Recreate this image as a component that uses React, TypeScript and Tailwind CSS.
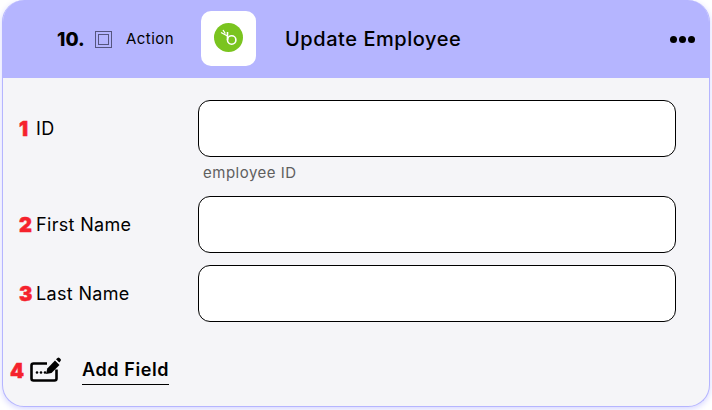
const FIELDS = [
    { num: '1', label: 'ID', hint: 'employee ID' },
    { num: '2', label: 'First Name' },
    { num: '3', label: 'Last Name' },
]

function RedNum({ value, className }: { value: string; className: string }) {
    return <span className={`text-[20px] font-black leading-none text-[#f5222d] [-webkit-text-stroke:0.5px_#f5222d] ${className}`}>{value}</span>
}

function BambooLogo() {
    return (
        <svg width="30" height="30" viewBox="0 0 30 30">
            <circle cx="14.500" cy="14.500" r="14.500" fill="#7ac41f" />
            <circle cx="17.700" cy="17" r="4.200" fill="none" stroke="#fff" strokeWidth="1.600" />
            <path d="M13.500 9V17" stroke="#fff" strokeWidth="1.600" fill="none" />
            <path d="M13.500 13L7 9.500M9 7l2.300 3.500" stroke="#fff" strokeWidth="1.300" fill="none" />
        </svg>
    )
}

function AddFieldIcon() {
    return (
        <svg width="31" height="26" viewBox="0 0 31 26" fill="none">
            <path d="M17 6.500H3.500a2 2 0 0 0-2 2v13a2 2 0 0 0 2 2h21a2 2 0 0 0 2-2v-9" stroke="#000" strokeWidth="2.600" />
            <circle cx="7" cy="15.500" r="1.300" fill="#000" />
            <circle cx="11" cy="15.500" r="1.300" fill="#000" />
            <circle cx="15" cy="15.500" r="1.300" fill="#000" />
            <path d="M16 17l1.300-5.500L25 3.500l4.500 4.500-8 8z" fill="#000" />
            <path d="M26 2.300L27.500 1a1.500 1.500 0 0 1 2 0l1 1a1.500 1.500 0 0 1 0 2L29.300 5.500z" fill="#000" />
        </svg>
    )
}

export default function App() {
    return (
        <div className="h-[410px] w-[712px] bg-white px-[2px] pb-[3px] font-['Inter',sans-serif] text-black">
            <div className="h-[407px] overflow-hidden rounded-[22px] border border-t-0 border-[#b5b5ff] bg-[#f5f5f8] shadow-[0_2px_6px_#d5d5ff]">
                {/* Header */}
                <header className="flex h-[78px] items-center bg-[#b5b5ff] pl-[54px] pr-[14px]">
                    <span className="mt-[3px] w-[38px] text-[19px] font-extrabold">10.</span>
                    <span className="flex h-[17px] w-[17px] items-center justify-center border border-[#55557f]">
                        <span className="h-[11px] w-[11px] border border-[#55557f]" />
                    </span>
                    <span className="ml-[14px] w-[75px] text-[15px] tracking-[0.45px]">Action</span>
                    <span className="-mt-[2px] flex h-[55px] w-[55px] items-center justify-center rounded-[10px] bg-white">
                        <BambooLogo />
                    </span>
                    <h1 className="ml-[29px] flex-1 text-[20px] font-medium tracking-[0.55px]">Update Employee</h1>
                    <span className="flex gap-[2px]">
                        <span className="h-[7px] w-[7px] rounded-full bg-black" />
                        <span className="h-[7px] w-[7px] rounded-full bg-black" />
                        <span className="h-[7px] w-[7px] rounded-full bg-black" />
                    </span>
                </header>

                {/* Fields */}
                <div className="flex flex-col gap-3 pl-[16px] pr-[33px] pt-[22px]">
                    {FIELDS.map((field) => (
                        <div key={field.label} className="flex items-start">
                            <div className="flex h-[57px] w-[179px] items-center">
                                <RedNum value={field.num} className="w-[17px]" />
                                <span className="text-[18px] tracking-[0.33px]">{field.label}</span>
                            </div>
                            <div className="flex-1">
                                <div className="h-[57px] rounded-[12px] border border-black bg-white" />
                                {field.hint && (
                                    <p className="mb-[1px] ml-[5px] mt-[6px] text-[15px] leading-[20px] tracking-[0.5px] text-[#5f5f5f]">{field.hint}</p>
                                )}
                            </div>
                        </div>
                    ))}
                </div>

                {/* Add field */}
                <div className="ml-[7px] mt-[32px] flex items-center">
                    <RedNum value="4" className="mt-[2px] w-[20px]" />
                    <AddFieldIcon />
                    <span className="ml-[21px] mt-[5px] border-b border-black pb-[3px] text-[18px] font-semibold leading-[22px] tracking-[0.6px]">Add Field</span>
                </div>
            </div>
        </div>
    )
}
